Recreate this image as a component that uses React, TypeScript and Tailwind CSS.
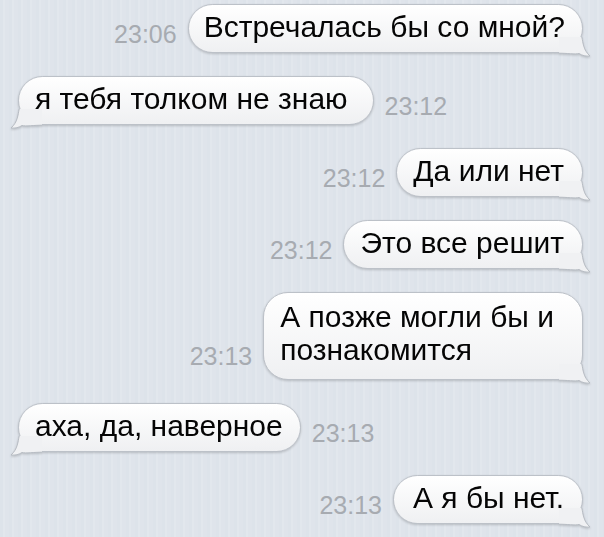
import React from "react";

type Msg = { text: string[]; time: string; side: "left" | "right"; pad: string };

const msgs: Msg[] = [
  { text: ["Встречалась бы со мной?"], time: "23:06", side: "right", pad: "pl-[15px] pr-[17px]" },
  { text: ["я тебя толком не знаю"], time: "23:12", side: "left", pad: "pl-[16px] pr-[25px]" },
  { text: ["Да или нет"], time: "23:12", side: "right", pad: "pl-[16px] pr-[18px]" },
  { text: ["Это все решит"], time: "23:12", side: "right", pad: "pl-[16px] pr-[18px]" },
  { text: ["А позже могли бы и", "познакомится"], time: "23:13", side: "right", pad: "pl-[16px] pr-[28px]" },
  { text: ["аха, да, наверное"], time: "23:13", side: "left", pad: "pl-[16px] pr-[17px]" },
  { text: ["А я бы нет."], time: "23:13", side: "right", pad: "pl-[19px] pr-[18px]" },
];

function Tail({ side }: { side: "left" | "right" }) {
  return (
    <svg
      width="32"
      height="20"
      viewBox="0 0 32 20"
      className={
        side === "right"
          ? "absolute right-[-8px] bottom-[-4px]"
          : "absolute left-[-8px] bottom-[-4px] -scale-x-100"
      }
    >
      <path
        d="M0 -1 L22.5 -1 C24 6 24 13 31 19 C27 19.5 23 18.5 20 16.5 C16 17.5 8 16.2 0 16.2 Z"
        fill="#f0f1f3"
      />
      <path
        d="M22.8 0 C24.2 6 24.2 13 31 19 C27 19.5 23 18.5 20 16.5 C16 17.5 8 16.2 0 16.2"
        fill="none"
        stroke="#b7bcc3"
        strokeWidth="1"
      />
    </svg>
  );
}

function Bubble({ m }: { m: Msg }) {
  const two = m.text.length > 1;
  return (
    <div className="relative drop-shadow-[0_1px_1px_rgba(0,0,0,0.18)]">
      <div
        className={
          "rounded-[25px] border border-[#bcc1c8] bg-gradient-to-b from-white to-[#eff0f2] text-[30px] leading-[33px] text-[#050505] " +
          (two ? "pt-[7px] pb-[13px] " : "pt-[5px] pb-[9px] ") +
          m.pad
        }
      >
        {m.text.map((t, i) => (
          <div key={i} className="whitespace-nowrap">
            {t}
          </div>
        ))}
      </div>
      <Tail side={m.side} />
    </div>
  );
}

function Time({ t, two }: { t: string; two: boolean }) {
  return (
    <div
      className={
        "text-[25px] leading-[25px] text-[#a7abb1] whitespace-nowrap " +
        (two ? "pb-[11px]" : "pb-[6px]")
      }
    >
      {t}
    </div>
  );
}

export default function App() {
  return (
    <div
      className="w-[604px] h-[537px] overflow-hidden bg-[repeating-linear-gradient(90deg,#dde3ea_0px,#dde3ea_3px,#e2e7ed_3px,#e2e7ed_5px,#dfe4eb_5px,#dfe4eb_9px)] pt-[4px] pl-[18px] pr-[21px] flex flex-col gap-[23px]"
      style={{ fontFamily: '"Liberation Sans", Arial, sans-serif' }}
    >
      {msgs.map((m, i) => (
        <div
          key={i}
          className={
            "flex items-end gap-[11px] " +
            (m.side === "right" ? "justify-end" : "justify-start")
          }
        >
          {m.side === "right" ? (
            <>
              <Time t={m.time} two={m.text.length > 1} />
              <Bubble m={m} />
            </>
          ) : (
            <>
              <Bubble m={m} />
              <Time t={m.time} two={m.text.length > 1} />
            </>
          )}
        </div>
      ))}
    </div>
  );
}
